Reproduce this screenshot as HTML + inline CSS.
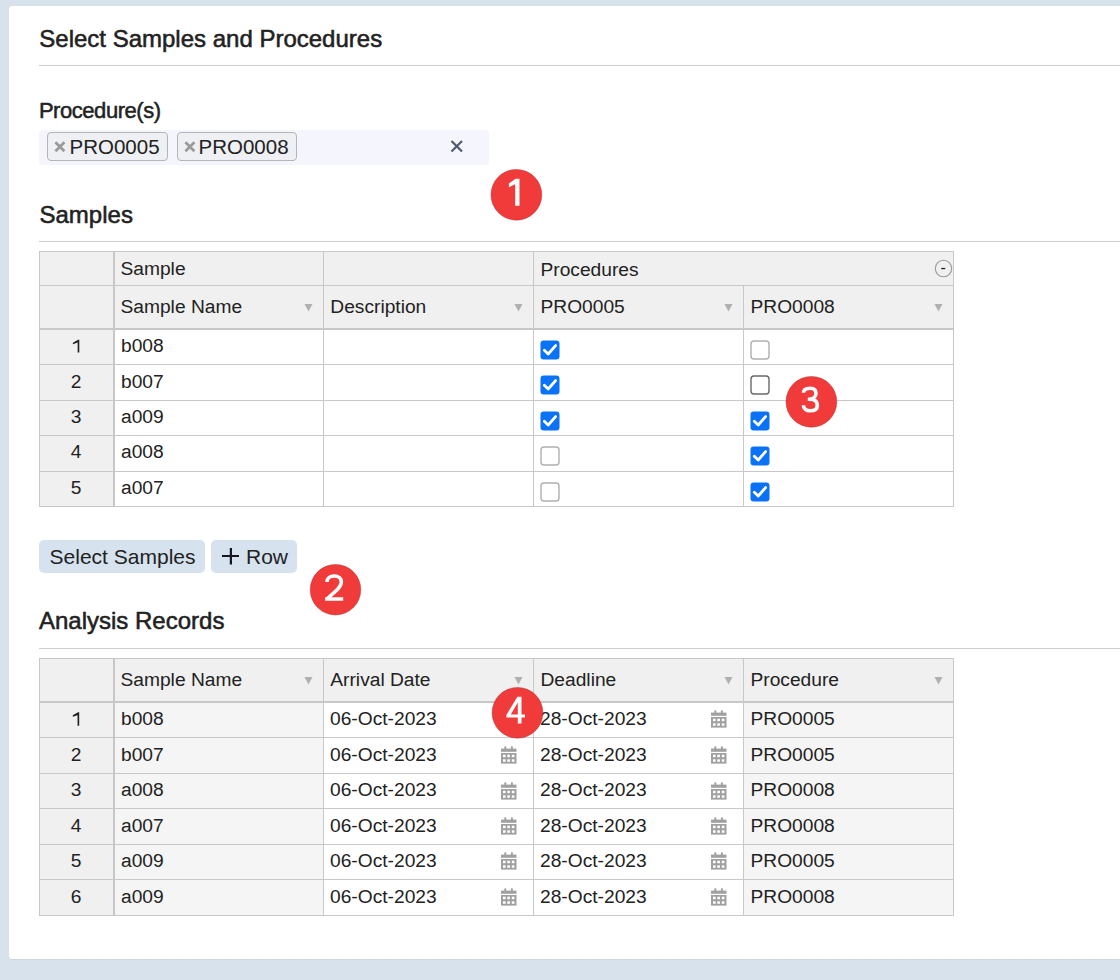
<!DOCTYPE html>
<html><head><meta charset="utf-8"><title>Select Samples and Procedures</title>
<style>
html,body{margin:0;padding:0}
body{width:1120px;height:980px;overflow:hidden;background:#d8e2ed;position:relative;font-family:"Liberation Sans", sans-serif}
.card{position:absolute;left:9px;top:6px;width:1130px;height:953px;background:#fff;border-radius:3px;box-shadow:0 1px 1px rgba(60,70,80,0.07)}
.t{position:absolute;white-space:nowrap}
.r{position:absolute;display:block}
.badge{position:absolute;width:51px;height:51px;border-radius:50%;background:#ea3b3c;color:#fff;font-size:36px;font-weight:bold;line-height:51px;text-align:center;box-shadow:0 0 0 0.6px rgba(150,30,30,0.5)}
</style></head><body>
<div class="card"></div>
<div class="t" style="left:39.30px;top:27.28px;font-size:24px;line-height:24px;color:#222;font-weight:normal;-webkit-text-stroke:0.55px #222;">Select Samples and Procedures</div>
<div class="r" style="left:39px;top:65px;width:1081px;height:1px;background:#cdcdcd;"></div>
<div class="t" style="left:38.90px;top:100.28px;font-size:22px;line-height:22px;color:#222;font-weight:normal;-webkit-text-stroke:0.5px #222;letter-spacing:-0.45px;">Procedure(s)</div>
<div class="r" style="left:39px;top:130px;width:450px;height:35px;background:#f5f5fd;border-radius:4px"></div>
<div class="r" style="left:47px;top:132px;width:119px;height:27px;background:#eef0f4;border:1px solid #b4b4b4;border-radius:4px"></div>
<svg class="r" style="left:54px;top:141px" width="12" height="12" viewBox="0 0 12 12"><path d="M1.4 1.3 L10.4 10.3 M10.4 1.3 L1.4 10.3" stroke="#9a9a9a" stroke-width="2.7"/></svg>
<div class="t" style="left:69.50px;top:136.75px;font-size:20.5px;line-height:20.5px;color:#222;font-weight:normal;">PRO0005</div>
<div class="r" style="left:176.5px;top:132px;width:118px;height:27px;background:#eef0f4;border:1px solid #b4b4b4;border-radius:4px"></div>
<svg class="r" style="left:183.5px;top:141px" width="12" height="12" viewBox="0 0 12 12"><path d="M1.4 1.3 L10.4 10.3 M10.4 1.3 L1.4 10.3" stroke="#9a9a9a" stroke-width="2.7"/></svg>
<div class="t" style="left:198.50px;top:136.75px;font-size:20.5px;line-height:20.5px;color:#222;font-weight:normal;">PRO0008</div>
<svg class="r" style="left:450px;top:140px" width="14" height="13" viewBox="0 0 14 13"><path d="M1.5 1 L12 11.5 M12 1 L1.5 11.5" stroke="#4d5b70" stroke-width="2.2"/></svg>
<div class="t" style="left:39.50px;top:202.58px;font-size:24px;line-height:24px;color:#222;font-weight:normal;-webkit-text-stroke:0.55px #222;">Samples</div>
<div class="r" style="left:39px;top:241px;width:1081px;height:1px;background:#cdcdcd;"></div>
<div class="r" style="left:39px;top:251px;width:914px;height:79px;background:#f0f0f0;"></div>
<div class="r" style="left:39px;top:328px;width:75px;height:178px;background:#f0f0f0;"></div>
<div class="r" style="left:115px;top:330px;width:838px;height:176px;background:#ffffff;"></div>
<div class="r" style="left:39px;top:251px;width:915px;height:1px;background:#c8c8c8;"></div>
<div class="r" style="left:39px;top:285px;width:75px;height:1px;background:#c8c8c8;"></div>
<div class="r" style="left:114px;top:285px;width:840px;height:1px;background:#c8c8c8;"></div>
<div class="r" style="left:39px;top:328px;width:915px;height:2px;background:#c8c8c8;"></div>
<div class="r" style="left:39px;top:364px;width:915px;height:1px;background:#c8c8c8;"></div>
<div class="r" style="left:39px;top:400px;width:915px;height:1px;background:#c8c8c8;"></div>
<div class="r" style="left:39px;top:435px;width:915px;height:1px;background:#c8c8c8;"></div>
<div class="r" style="left:39px;top:471px;width:915px;height:1px;background:#c8c8c8;"></div>
<div class="r" style="left:39px;top:506px;width:915px;height:1px;background:#c8c8c8;"></div>
<div class="r" style="left:39px;top:251px;width:1px;height:256px;background:#c8c8c8;"></div>
<div class="r" style="left:113px;top:251px;width:2px;height:256px;background:#c8c8c8;"></div>
<div class="r" style="left:323px;top:251px;width:1px;height:256px;background:#c8c8c8;"></div>
<div class="r" style="left:533px;top:251px;width:1px;height:256px;background:#c8c8c8;"></div>
<div class="r" style="left:743px;top:285px;width:1px;height:222px;background:#c8c8c8;"></div>
<div class="r" style="left:953px;top:251px;width:1px;height:256px;background:#c8c8c8;"></div>
<div class="t" style="left:120.50px;top:259.45px;font-size:19.2px;line-height:19.2px;color:#222;font-weight:normal;">Sample</div>
<div class="t" style="left:540.50px;top:259.65px;font-size:19.2px;line-height:19.2px;color:#222;font-weight:normal;">Procedures</div>
<div class="t" style="left:120.50px;top:297.25px;font-size:19.2px;line-height:19.2px;color:#222;font-weight:normal;">Sample Name</div>
<div class="t" style="left:330.30px;top:297.25px;font-size:19.2px;line-height:19.2px;color:#222;font-weight:normal;">Description</div>
<div class="t" style="left:540.50px;top:297.25px;font-size:19.2px;line-height:19.2px;color:#222;font-weight:normal;">PRO0005</div>
<div class="t" style="left:750.50px;top:297.25px;font-size:19.2px;line-height:19.2px;color:#222;font-weight:normal;">PRO0008</div>
<svg class="r" style="left:304.0px;top:302.5px" width="9" height="9" viewBox="0 0 9 9"><path d="M0.5 1 L8.5 1 L4.5 8.5 Z" fill="#b0b0b0"/></svg>
<svg class="r" style="left:513.5px;top:302.5px" width="9" height="9" viewBox="0 0 9 9"><path d="M0.5 1 L8.5 1 L4.5 8.5 Z" fill="#b0b0b0"/></svg>
<svg class="r" style="left:723.5px;top:302.5px" width="9" height="9" viewBox="0 0 9 9"><path d="M0.5 1 L8.5 1 L4.5 8.5 Z" fill="#b0b0b0"/></svg>
<svg class="r" style="left:933.5px;top:302.5px" width="9" height="9" viewBox="0 0 9 9"><path d="M0.5 1 L8.5 1 L4.5 8.5 Z" fill="#b0b0b0"/></svg>
<svg class="r" style="left:934px;top:259px" width="19" height="19" viewBox="0 0 19 19"><circle cx="9.5" cy="9.5" r="8.2" fill="none" stroke="#9a9a9a" stroke-width="1.1"/><rect x="7.2" y="8.9" width="4" height="1.3" fill="#222"/></svg>
<svg class="r" style="left:0;top:0" width="1120" height="980"><path fill="#222" d="M77.64999999999999 339.9 L78.2 339.7 L79.3 339.7 L79.3 352.6 L77.64999999999999 352.6 L77.64999999999999 342.59999999999997 L72.89999999999999 344.2 L72.89999999999999 342.7 Z"/></svg>
<div class="t" style="left:121.00px;top:336.35px;font-size:19.2px;line-height:19.2px;color:#222;font-weight:normal;">b008</div>
<svg class="r" style="left:540px;top:340px" width="20" height="20" viewBox="0 0 20 20"><rect x="0.5" y="0.5" width="19" height="19" rx="3.2" fill="#0a72f6"/><path d="M4.3 10.2 L8.2 14 L15.6 5.6" fill="none" stroke="#fff" stroke-width="2.8" stroke-linecap="round" stroke-linejoin="round"/></svg>
<svg class="r" style="left:750px;top:340px" width="20" height="20" viewBox="0 0 20 20"><rect x="1" y="1" width="18" height="18" rx="3" fill="#fff" stroke="#b0b0b0" stroke-width="1.4"/></svg>
<div class="t" style="left:0.00px;top:371.65px;font-size:19.2px;line-height:19.2px;color:#222;font-weight:normal;width:152px;text-align:center;">2</div>
<div class="t" style="left:121.00px;top:371.65px;font-size:19.2px;line-height:19.2px;color:#222;font-weight:normal;">b007</div>
<svg class="r" style="left:540px;top:375px" width="20" height="20" viewBox="0 0 20 20"><rect x="0.5" y="0.5" width="19" height="19" rx="3.2" fill="#0a72f6"/><path d="M4.3 10.2 L8.2 14 L15.6 5.6" fill="none" stroke="#fff" stroke-width="2.8" stroke-linecap="round" stroke-linejoin="round"/></svg>
<svg class="r" style="left:750px;top:375px" width="20" height="20" viewBox="0 0 20 20"><rect x="1" y="1" width="18" height="18" rx="3" fill="#fff" stroke="#6a6a6a" stroke-width="1.4"/></svg>
<div class="t" style="left:0.00px;top:407.35px;font-size:19.2px;line-height:19.2px;color:#222;font-weight:normal;width:152px;text-align:center;">3</div>
<div class="t" style="left:121.00px;top:407.35px;font-size:19.2px;line-height:19.2px;color:#222;font-weight:normal;">a009</div>
<svg class="r" style="left:540px;top:411px" width="20" height="20" viewBox="0 0 20 20"><rect x="0.5" y="0.5" width="19" height="19" rx="3.2" fill="#0a72f6"/><path d="M4.3 10.2 L8.2 14 L15.6 5.6" fill="none" stroke="#fff" stroke-width="2.8" stroke-linecap="round" stroke-linejoin="round"/></svg>
<svg class="r" style="left:750px;top:411px" width="20" height="20" viewBox="0 0 20 20"><rect x="0.5" y="0.5" width="19" height="19" rx="3.2" fill="#0a72f6"/><path d="M4.3 10.2 L8.2 14 L15.6 5.6" fill="none" stroke="#fff" stroke-width="2.8" stroke-linecap="round" stroke-linejoin="round"/></svg>
<div class="t" style="left:0.00px;top:442.35px;font-size:19.2px;line-height:19.2px;color:#222;font-weight:normal;width:152px;text-align:center;">4</div>
<div class="t" style="left:121.00px;top:442.35px;font-size:19.2px;line-height:19.2px;color:#222;font-weight:normal;">a008</div>
<svg class="r" style="left:540px;top:446px" width="20" height="20" viewBox="0 0 20 20"><rect x="1" y="1" width="18" height="18" rx="3" fill="#fff" stroke="#b0b0b0" stroke-width="1.4"/></svg>
<svg class="r" style="left:750px;top:446px" width="20" height="20" viewBox="0 0 20 20"><rect x="0.5" y="0.5" width="19" height="19" rx="3.2" fill="#0a72f6"/><path d="M4.3 10.2 L8.2 14 L15.6 5.6" fill="none" stroke="#fff" stroke-width="2.8" stroke-linecap="round" stroke-linejoin="round"/></svg>
<div class="t" style="left:0.00px;top:478.15px;font-size:19.2px;line-height:19.2px;color:#222;font-weight:normal;width:152px;text-align:center;">5</div>
<div class="t" style="left:121.00px;top:478.15px;font-size:19.2px;line-height:19.2px;color:#222;font-weight:normal;">a007</div>
<svg class="r" style="left:540px;top:482px" width="20" height="20" viewBox="0 0 20 20"><rect x="1" y="1" width="18" height="18" rx="3" fill="#fff" stroke="#b0b0b0" stroke-width="1.4"/></svg>
<svg class="r" style="left:750px;top:482px" width="20" height="20" viewBox="0 0 20 20"><rect x="0.5" y="0.5" width="19" height="19" rx="3.2" fill="#0a72f6"/><path d="M4.3 10.2 L8.2 14 L15.6 5.6" fill="none" stroke="#fff" stroke-width="2.8" stroke-linecap="round" stroke-linejoin="round"/></svg>
<div class="r" style="left:39px;top:540px;width:166px;height:33px;background:#d6e2ee;border-radius:5px"></div>
<div class="r" style="left:211px;top:540px;width:86px;height:33px;background:#d6e2ee;border-radius:5px"></div>
<div class="t" style="left:49.60px;top:546.02px;font-size:21px;line-height:21px;color:#222;font-weight:normal;">Select Samples</div>
<svg class="r" style="left:222px;top:548px" width="17" height="17" viewBox="0 0 17 17"><path d="M8.9 0 V16.5 M0 8 H17" stroke="#141620" stroke-width="2.2"/></svg>
<div class="t" style="left:246.00px;top:546.22px;font-size:21px;line-height:21px;color:#222;font-weight:normal;">Row</div>
<div class="t" style="left:39.00px;top:608.68px;font-size:24px;line-height:24px;color:#222;font-weight:normal;-webkit-text-stroke:0.55px #222;">Analysis Records</div>
<div class="r" style="left:39px;top:648px;width:1081px;height:1px;background:#cdcdcd;"></div>
<div class="r" style="left:39px;top:658px;width:914px;height:45px;background:#f0f0f0;"></div>
<div class="r" style="left:39px;top:701px;width:75px;height:214px;background:#f0f0f0;"></div>
<div class="r" style="left:115px;top:703px;width:838px;height:212px;background:#ffffff;"></div>
<div class="r" style="left:115px;top:703px;width:208px;height:212px;background:#f5f5f5;"></div>
<div class="r" style="left:744px;top:703px;width:209px;height:212px;background:#f5f5f5;"></div>
<div class="r" style="left:39px;top:658px;width:915px;height:1px;background:#c8c8c8;"></div>
<div class="r" style="left:39px;top:701px;width:915px;height:2px;background:#c8c8c8;"></div>
<div class="r" style="left:39px;top:737px;width:915px;height:1px;background:#c8c8c8;"></div>
<div class="r" style="left:39px;top:773px;width:915px;height:1px;background:#c8c8c8;"></div>
<div class="r" style="left:39px;top:808px;width:915px;height:1px;background:#c8c8c8;"></div>
<div class="r" style="left:39px;top:844px;width:915px;height:1px;background:#c8c8c8;"></div>
<div class="r" style="left:39px;top:879px;width:915px;height:1px;background:#c8c8c8;"></div>
<div class="r" style="left:39px;top:915px;width:915px;height:1px;background:#c8c8c8;"></div>
<div class="r" style="left:39px;top:658px;width:1px;height:258px;background:#c8c8c8;"></div>
<div class="r" style="left:113px;top:658px;width:2px;height:258px;background:#c8c8c8;"></div>
<div class="r" style="left:323px;top:658px;width:1px;height:258px;background:#c8c8c8;"></div>
<div class="r" style="left:533px;top:658px;width:1px;height:258px;background:#c8c8c8;"></div>
<div class="r" style="left:743px;top:658px;width:1px;height:258px;background:#c8c8c8;"></div>
<div class="r" style="left:953px;top:658px;width:1px;height:258px;background:#c8c8c8;"></div>
<div class="t" style="left:120.50px;top:670.35px;font-size:19.2px;line-height:19.2px;color:#222;font-weight:normal;">Sample Name</div>
<div class="t" style="left:330.30px;top:670.35px;font-size:19.2px;line-height:19.2px;color:#222;font-weight:normal;">Arrival Date</div>
<div class="t" style="left:540.50px;top:670.35px;font-size:19.2px;line-height:19.2px;color:#222;font-weight:normal;">Deadline</div>
<div class="t" style="left:750.50px;top:670.35px;font-size:19.2px;line-height:19.2px;color:#222;font-weight:normal;">Procedure</div>
<svg class="r" style="left:304.0px;top:675.5px" width="9" height="9" viewBox="0 0 9 9"><path d="M0.5 1 L8.5 1 L4.5 8.5 Z" fill="#b0b0b0"/></svg>
<svg class="r" style="left:513.5px;top:675.5px" width="9" height="9" viewBox="0 0 9 9"><path d="M0.5 1 L8.5 1 L4.5 8.5 Z" fill="#b0b0b0"/></svg>
<svg class="r" style="left:723.5px;top:675.5px" width="9" height="9" viewBox="0 0 9 9"><path d="M0.5 1 L8.5 1 L4.5 8.5 Z" fill="#b0b0b0"/></svg>
<svg class="r" style="left:933.5px;top:675.5px" width="9" height="9" viewBox="0 0 9 9"><path d="M0.5 1 L8.5 1 L4.5 8.5 Z" fill="#b0b0b0"/></svg>
<svg class="r" style="left:0;top:0" width="1120" height="980"><path fill="#222" d="M77.55 712.5 L78.10000000000001 712.3 L79.2 712.3 L79.2 725.7 L77.55 725.7 L77.55 715.1999999999999 L72.8 716.8 L72.8 715.3 Z"/></svg>
<div class="t" style="left:121.00px;top:709.05px;font-size:19.2px;line-height:19.2px;color:#222;font-weight:normal;">b008</div>
<div class="t" style="left:330.00px;top:709.05px;font-size:19.2px;line-height:19.2px;color:#222;font-weight:normal;">06-Oct-2023</div>
<div class="t" style="left:540.00px;top:709.05px;font-size:19.2px;line-height:19.2px;color:#222;font-weight:normal;">28-Oct-2023</div>
<div class="t" style="left:750.50px;top:709.05px;font-size:19.2px;line-height:19.2px;color:#222;font-weight:normal;">PRO0005</div>
<svg class="r" style="left:501px;top:710px" width="16" height="18" viewBox="0 0 16 18"><rect x="0" y="2.6" width="15.5" height="3.2" fill="#a0a0a0"/><rect x="3.3" y="0.2" width="2" height="3" rx="0.8" fill="#a0a0a0"/><rect x="9.9" y="0.2" width="2" height="3" rx="0.8" fill="#a0a0a0"/><rect x="0" y="7" width="15.5" height="10.6" fill="#a0a0a0"/><rect x="2" y="8.7" width="2.6" height="2.5" fill="#fff"/><rect x="2" y="13.3" width="2.6" height="2.5" fill="#fff"/><rect x="6.3" y="8.7" width="2.6" height="2.5" fill="#fff"/><rect x="6.3" y="13.3" width="2.6" height="2.5" fill="#fff"/><rect x="10.8" y="8.7" width="2.6" height="2.5" fill="#fff"/><rect x="10.8" y="13.3" width="2.6" height="2.5" fill="#fff"/></svg>
<svg class="r" style="left:711px;top:710px" width="16" height="18" viewBox="0 0 16 18"><rect x="0" y="2.6" width="15.5" height="3.2" fill="#a0a0a0"/><rect x="3.3" y="0.2" width="2" height="3" rx="0.8" fill="#a0a0a0"/><rect x="9.9" y="0.2" width="2" height="3" rx="0.8" fill="#a0a0a0"/><rect x="0" y="7" width="15.5" height="10.6" fill="#a0a0a0"/><rect x="2" y="8.7" width="2.6" height="2.5" fill="#fff"/><rect x="2" y="13.3" width="2.6" height="2.5" fill="#fff"/><rect x="6.3" y="8.7" width="2.6" height="2.5" fill="#fff"/><rect x="6.3" y="13.3" width="2.6" height="2.5" fill="#fff"/><rect x="10.8" y="8.7" width="2.6" height="2.5" fill="#fff"/><rect x="10.8" y="13.3" width="2.6" height="2.5" fill="#fff"/></svg>
<div class="t" style="left:0.00px;top:744.55px;font-size:19.2px;line-height:19.2px;color:#222;font-weight:normal;width:152px;text-align:center;">2</div>
<div class="t" style="left:121.00px;top:744.55px;font-size:19.2px;line-height:19.2px;color:#222;font-weight:normal;">b007</div>
<div class="t" style="left:330.00px;top:744.55px;font-size:19.2px;line-height:19.2px;color:#222;font-weight:normal;">06-Oct-2023</div>
<div class="t" style="left:540.00px;top:744.55px;font-size:19.2px;line-height:19.2px;color:#222;font-weight:normal;">28-Oct-2023</div>
<div class="t" style="left:750.50px;top:744.55px;font-size:19.2px;line-height:19.2px;color:#222;font-weight:normal;">PRO0005</div>
<svg class="r" style="left:501px;top:746px" width="16" height="18" viewBox="0 0 16 18"><rect x="0" y="2.6" width="15.5" height="3.2" fill="#a0a0a0"/><rect x="3.3" y="0.2" width="2" height="3" rx="0.8" fill="#a0a0a0"/><rect x="9.9" y="0.2" width="2" height="3" rx="0.8" fill="#a0a0a0"/><rect x="0" y="7" width="15.5" height="10.6" fill="#a0a0a0"/><rect x="2" y="8.7" width="2.6" height="2.5" fill="#fff"/><rect x="2" y="13.3" width="2.6" height="2.5" fill="#fff"/><rect x="6.3" y="8.7" width="2.6" height="2.5" fill="#fff"/><rect x="6.3" y="13.3" width="2.6" height="2.5" fill="#fff"/><rect x="10.8" y="8.7" width="2.6" height="2.5" fill="#fff"/><rect x="10.8" y="13.3" width="2.6" height="2.5" fill="#fff"/></svg>
<svg class="r" style="left:711px;top:746px" width="16" height="18" viewBox="0 0 16 18"><rect x="0" y="2.6" width="15.5" height="3.2" fill="#a0a0a0"/><rect x="3.3" y="0.2" width="2" height="3" rx="0.8" fill="#a0a0a0"/><rect x="9.9" y="0.2" width="2" height="3" rx="0.8" fill="#a0a0a0"/><rect x="0" y="7" width="15.5" height="10.6" fill="#a0a0a0"/><rect x="2" y="8.7" width="2.6" height="2.5" fill="#fff"/><rect x="2" y="13.3" width="2.6" height="2.5" fill="#fff"/><rect x="6.3" y="8.7" width="2.6" height="2.5" fill="#fff"/><rect x="6.3" y="13.3" width="2.6" height="2.5" fill="#fff"/><rect x="10.8" y="8.7" width="2.6" height="2.5" fill="#fff"/><rect x="10.8" y="13.3" width="2.6" height="2.5" fill="#fff"/></svg>
<div class="t" style="left:0.00px;top:780.05px;font-size:19.2px;line-height:19.2px;color:#222;font-weight:normal;width:152px;text-align:center;">3</div>
<div class="t" style="left:121.00px;top:780.05px;font-size:19.2px;line-height:19.2px;color:#222;font-weight:normal;">a008</div>
<div class="t" style="left:330.00px;top:780.05px;font-size:19.2px;line-height:19.2px;color:#222;font-weight:normal;">06-Oct-2023</div>
<div class="t" style="left:540.00px;top:780.05px;font-size:19.2px;line-height:19.2px;color:#222;font-weight:normal;">28-Oct-2023</div>
<div class="t" style="left:750.50px;top:780.05px;font-size:19.2px;line-height:19.2px;color:#222;font-weight:normal;">PRO0008</div>
<svg class="r" style="left:501px;top:782px" width="16" height="18" viewBox="0 0 16 18"><rect x="0" y="2.6" width="15.5" height="3.2" fill="#a0a0a0"/><rect x="3.3" y="0.2" width="2" height="3" rx="0.8" fill="#a0a0a0"/><rect x="9.9" y="0.2" width="2" height="3" rx="0.8" fill="#a0a0a0"/><rect x="0" y="7" width="15.5" height="10.6" fill="#a0a0a0"/><rect x="2" y="8.7" width="2.6" height="2.5" fill="#fff"/><rect x="2" y="13.3" width="2.6" height="2.5" fill="#fff"/><rect x="6.3" y="8.7" width="2.6" height="2.5" fill="#fff"/><rect x="6.3" y="13.3" width="2.6" height="2.5" fill="#fff"/><rect x="10.8" y="8.7" width="2.6" height="2.5" fill="#fff"/><rect x="10.8" y="13.3" width="2.6" height="2.5" fill="#fff"/></svg>
<svg class="r" style="left:711px;top:782px" width="16" height="18" viewBox="0 0 16 18"><rect x="0" y="2.6" width="15.5" height="3.2" fill="#a0a0a0"/><rect x="3.3" y="0.2" width="2" height="3" rx="0.8" fill="#a0a0a0"/><rect x="9.9" y="0.2" width="2" height="3" rx="0.8" fill="#a0a0a0"/><rect x="0" y="7" width="15.5" height="10.6" fill="#a0a0a0"/><rect x="2" y="8.7" width="2.6" height="2.5" fill="#fff"/><rect x="2" y="13.3" width="2.6" height="2.5" fill="#fff"/><rect x="6.3" y="8.7" width="2.6" height="2.5" fill="#fff"/><rect x="6.3" y="13.3" width="2.6" height="2.5" fill="#fff"/><rect x="10.8" y="8.7" width="2.6" height="2.5" fill="#fff"/><rect x="10.8" y="13.3" width="2.6" height="2.5" fill="#fff"/></svg>
<div class="t" style="left:0.00px;top:815.55px;font-size:19.2px;line-height:19.2px;color:#222;font-weight:normal;width:152px;text-align:center;">4</div>
<div class="t" style="left:121.00px;top:815.55px;font-size:19.2px;line-height:19.2px;color:#222;font-weight:normal;">a007</div>
<div class="t" style="left:330.00px;top:815.55px;font-size:19.2px;line-height:19.2px;color:#222;font-weight:normal;">06-Oct-2023</div>
<div class="t" style="left:540.00px;top:815.55px;font-size:19.2px;line-height:19.2px;color:#222;font-weight:normal;">28-Oct-2023</div>
<div class="t" style="left:750.50px;top:815.55px;font-size:19.2px;line-height:19.2px;color:#222;font-weight:normal;">PRO0008</div>
<svg class="r" style="left:501px;top:817px" width="16" height="18" viewBox="0 0 16 18"><rect x="0" y="2.6" width="15.5" height="3.2" fill="#a0a0a0"/><rect x="3.3" y="0.2" width="2" height="3" rx="0.8" fill="#a0a0a0"/><rect x="9.9" y="0.2" width="2" height="3" rx="0.8" fill="#a0a0a0"/><rect x="0" y="7" width="15.5" height="10.6" fill="#a0a0a0"/><rect x="2" y="8.7" width="2.6" height="2.5" fill="#fff"/><rect x="2" y="13.3" width="2.6" height="2.5" fill="#fff"/><rect x="6.3" y="8.7" width="2.6" height="2.5" fill="#fff"/><rect x="6.3" y="13.3" width="2.6" height="2.5" fill="#fff"/><rect x="10.8" y="8.7" width="2.6" height="2.5" fill="#fff"/><rect x="10.8" y="13.3" width="2.6" height="2.5" fill="#fff"/></svg>
<svg class="r" style="left:711px;top:817px" width="16" height="18" viewBox="0 0 16 18"><rect x="0" y="2.6" width="15.5" height="3.2" fill="#a0a0a0"/><rect x="3.3" y="0.2" width="2" height="3" rx="0.8" fill="#a0a0a0"/><rect x="9.9" y="0.2" width="2" height="3" rx="0.8" fill="#a0a0a0"/><rect x="0" y="7" width="15.5" height="10.6" fill="#a0a0a0"/><rect x="2" y="8.7" width="2.6" height="2.5" fill="#fff"/><rect x="2" y="13.3" width="2.6" height="2.5" fill="#fff"/><rect x="6.3" y="8.7" width="2.6" height="2.5" fill="#fff"/><rect x="6.3" y="13.3" width="2.6" height="2.5" fill="#fff"/><rect x="10.8" y="8.7" width="2.6" height="2.5" fill="#fff"/><rect x="10.8" y="13.3" width="2.6" height="2.5" fill="#fff"/></svg>
<div class="t" style="left:0.00px;top:851.05px;font-size:19.2px;line-height:19.2px;color:#222;font-weight:normal;width:152px;text-align:center;">5</div>
<div class="t" style="left:121.00px;top:851.05px;font-size:19.2px;line-height:19.2px;color:#222;font-weight:normal;">a009</div>
<div class="t" style="left:330.00px;top:851.05px;font-size:19.2px;line-height:19.2px;color:#222;font-weight:normal;">06-Oct-2023</div>
<div class="t" style="left:540.00px;top:851.05px;font-size:19.2px;line-height:19.2px;color:#222;font-weight:normal;">28-Oct-2023</div>
<div class="t" style="left:750.50px;top:851.05px;font-size:19.2px;line-height:19.2px;color:#222;font-weight:normal;">PRO0005</div>
<svg class="r" style="left:501px;top:852px" width="16" height="18" viewBox="0 0 16 18"><rect x="0" y="2.6" width="15.5" height="3.2" fill="#a0a0a0"/><rect x="3.3" y="0.2" width="2" height="3" rx="0.8" fill="#a0a0a0"/><rect x="9.9" y="0.2" width="2" height="3" rx="0.8" fill="#a0a0a0"/><rect x="0" y="7" width="15.5" height="10.6" fill="#a0a0a0"/><rect x="2" y="8.7" width="2.6" height="2.5" fill="#fff"/><rect x="2" y="13.3" width="2.6" height="2.5" fill="#fff"/><rect x="6.3" y="8.7" width="2.6" height="2.5" fill="#fff"/><rect x="6.3" y="13.3" width="2.6" height="2.5" fill="#fff"/><rect x="10.8" y="8.7" width="2.6" height="2.5" fill="#fff"/><rect x="10.8" y="13.3" width="2.6" height="2.5" fill="#fff"/></svg>
<svg class="r" style="left:711px;top:852px" width="16" height="18" viewBox="0 0 16 18"><rect x="0" y="2.6" width="15.5" height="3.2" fill="#a0a0a0"/><rect x="3.3" y="0.2" width="2" height="3" rx="0.8" fill="#a0a0a0"/><rect x="9.9" y="0.2" width="2" height="3" rx="0.8" fill="#a0a0a0"/><rect x="0" y="7" width="15.5" height="10.6" fill="#a0a0a0"/><rect x="2" y="8.7" width="2.6" height="2.5" fill="#fff"/><rect x="2" y="13.3" width="2.6" height="2.5" fill="#fff"/><rect x="6.3" y="8.7" width="2.6" height="2.5" fill="#fff"/><rect x="6.3" y="13.3" width="2.6" height="2.5" fill="#fff"/><rect x="10.8" y="8.7" width="2.6" height="2.5" fill="#fff"/><rect x="10.8" y="13.3" width="2.6" height="2.5" fill="#fff"/></svg>
<div class="t" style="left:0.00px;top:886.55px;font-size:19.2px;line-height:19.2px;color:#222;font-weight:normal;width:152px;text-align:center;">6</div>
<div class="t" style="left:121.00px;top:886.55px;font-size:19.2px;line-height:19.2px;color:#222;font-weight:normal;">a009</div>
<div class="t" style="left:330.00px;top:886.55px;font-size:19.2px;line-height:19.2px;color:#222;font-weight:normal;">06-Oct-2023</div>
<div class="t" style="left:540.00px;top:886.55px;font-size:19.2px;line-height:19.2px;color:#222;font-weight:normal;">28-Oct-2023</div>
<div class="t" style="left:750.50px;top:886.55px;font-size:19.2px;line-height:19.2px;color:#222;font-weight:normal;">PRO0008</div>
<svg class="r" style="left:501px;top:888px" width="16" height="18" viewBox="0 0 16 18"><rect x="0" y="2.6" width="15.5" height="3.2" fill="#a0a0a0"/><rect x="3.3" y="0.2" width="2" height="3" rx="0.8" fill="#a0a0a0"/><rect x="9.9" y="0.2" width="2" height="3" rx="0.8" fill="#a0a0a0"/><rect x="0" y="7" width="15.5" height="10.6" fill="#a0a0a0"/><rect x="2" y="8.7" width="2.6" height="2.5" fill="#fff"/><rect x="2" y="13.3" width="2.6" height="2.5" fill="#fff"/><rect x="6.3" y="8.7" width="2.6" height="2.5" fill="#fff"/><rect x="6.3" y="13.3" width="2.6" height="2.5" fill="#fff"/><rect x="10.8" y="8.7" width="2.6" height="2.5" fill="#fff"/><rect x="10.8" y="13.3" width="2.6" height="2.5" fill="#fff"/></svg>
<svg class="r" style="left:711px;top:888px" width="16" height="18" viewBox="0 0 16 18"><rect x="0" y="2.6" width="15.5" height="3.2" fill="#a0a0a0"/><rect x="3.3" y="0.2" width="2" height="3" rx="0.8" fill="#a0a0a0"/><rect x="9.9" y="0.2" width="2" height="3" rx="0.8" fill="#a0a0a0"/><rect x="0" y="7" width="15.5" height="10.6" fill="#a0a0a0"/><rect x="2" y="8.7" width="2.6" height="2.5" fill="#fff"/><rect x="2" y="13.3" width="2.6" height="2.5" fill="#fff"/><rect x="6.3" y="8.7" width="2.6" height="2.5" fill="#fff"/><rect x="6.3" y="13.3" width="2.6" height="2.5" fill="#fff"/><rect x="10.8" y="8.7" width="2.6" height="2.5" fill="#fff"/><rect x="10.8" y="13.3" width="2.6" height="2.5" fill="#fff"/></svg>
<svg class="r" style="left:0;top:0" width="1120" height="980" viewBox="0 0 1120 980"><g fill="#f13b3b" stroke="rgba(150,35,35,0.55)" stroke-width="0.7"><circle cx="516.4" cy="194.8" r="25.4"/><circle cx="335.5" cy="589.7" r="25.3"/><circle cx="811.4" cy="401.8" r="25.4"/><circle cx="517.5" cy="712.8" r="25.4"/></g><path fill="#fff" d="M508.9 183.6 L515.6 178.7 L519.5 178.7 L519.5 205.8 L515.2 205.8 L515.2 184.3 L508.9 187.2 Z"/><path fill="none" stroke="#fff" stroke-width="3.6" d="M327 582 C327 578.2 329.8 576 334.2 576 C338.6 576 341.3 578.6 341.3 582 C341.3 584.8 339.8 586.8 337.6 589.2 L327 599 M325.1 599 H343.2"/><path fill="none" stroke="#fff" stroke-width="3.6" d="M803.5 392.8 C803.6 389.8 806.3 388.3 810.2 388.3 C814 388.3 816 390.3 816 393.3 C816 396.8 813.4 399.2 809.8 399.2 L807.8 399.2 M809.8 399.2 C814.5 399.2 817.3 401.4 817.3 405.4 C817.3 408.7 814.6 410.7 810.2 410.7 C806.2 410.7 803.4 408.6 803.4 405.3"/><path fill="#fff" fill-rule="evenodd" d="M517.4 696.8 L521.5 696.8 L521.5 714.6 L525 714.6 L525 717.5 L521.5 717.5 L521.5 723.6 L517.8 723.6 L517.8 717.5 L506.4 717.5 L506.4 714.9 Z M517.8 702.6 L510.8 714.6 L517.8 714.6 Z"/></svg>
</body></html>
